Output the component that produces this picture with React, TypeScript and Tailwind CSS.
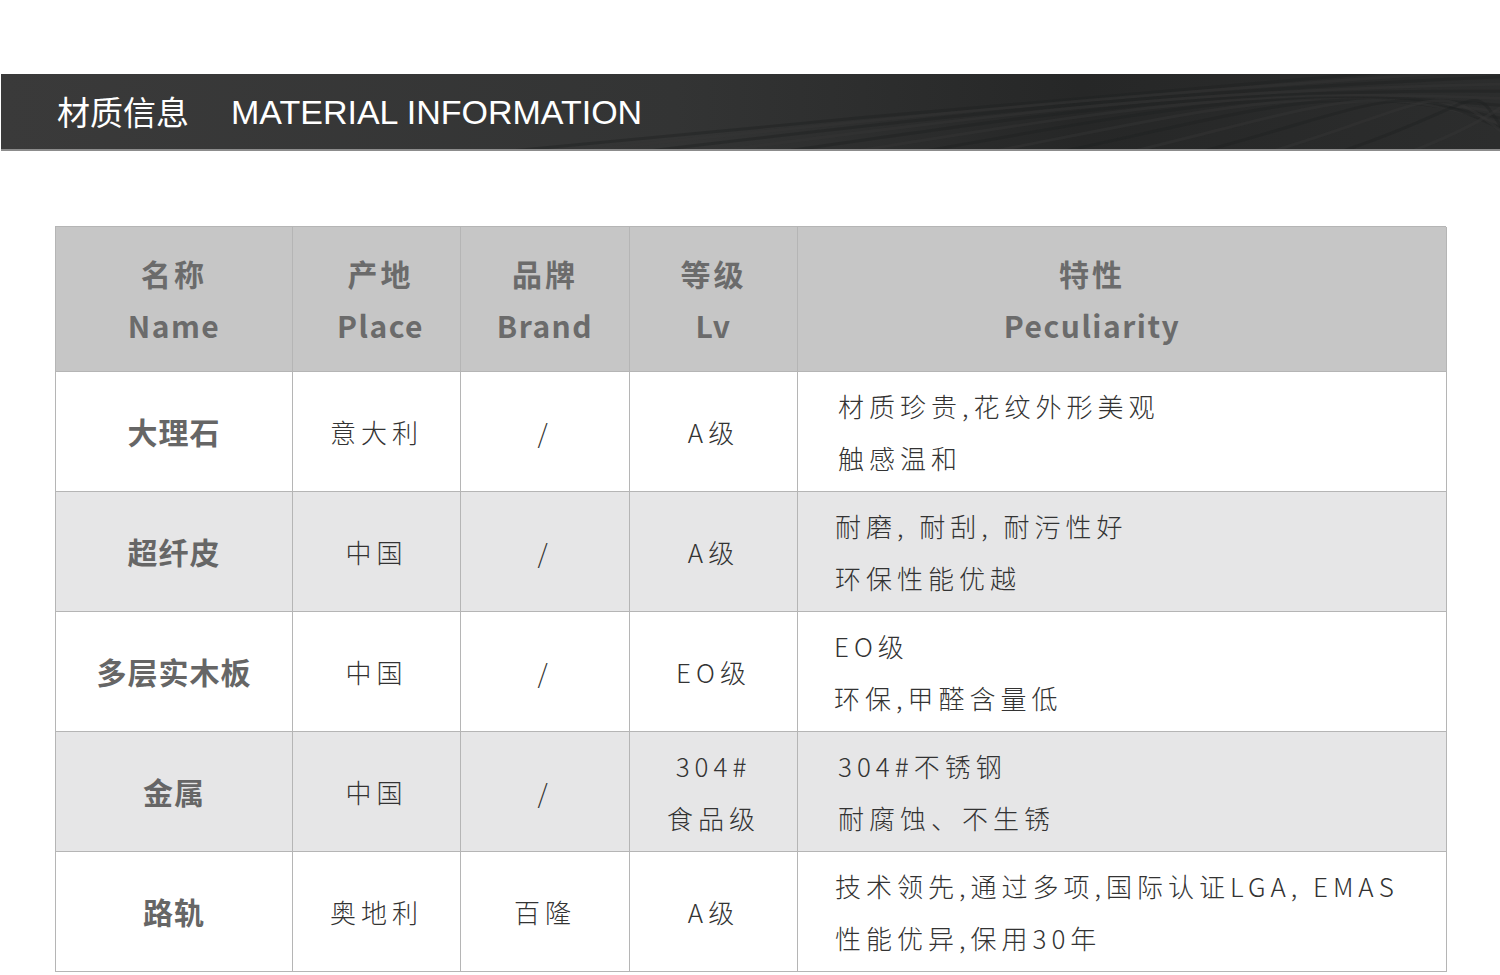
import React from 'react';

interface Row {
  name: string;
  place: string;
  brand: string;
  lv: string[];
  peculiarity: string[];
  shaded: boolean;
  padClass: string;
}

const ROWS: Row[] = [
  {
    name: '大理石',
    place: '意大利',
    brand: '/',
    lv: ['A级'],
    peculiarity: ['材质珍贵,花纹外形美观', '触感温和'],
    shaded: false,
    padClass: 'pl-[40px]',
  },
  {
    name: '超纤皮',
    place: '中国',
    brand: '/',
    lv: ['A级'],
    peculiarity: ['耐磨, 耐刮, 耐污性好', '环保性能优越'],
    shaded: true,
    padClass: 'pl-[37px]',
  },
  {
    name: '多层实木板',
    place: '中国',
    brand: '/',
    lv: ['EO级'],
    peculiarity: ['EO级', '环保,甲醛含量低'],
    shaded: false,
    padClass: 'pl-[36px]',
  },
  {
    name: '金属',
    place: '中国',
    brand: '/',
    lv: ['304#', '食品级'],
    peculiarity: ['304#不锈钢', '耐腐蚀、不生锈'],
    shaded: true,
    padClass: 'pl-[40px]',
  },
  {
    name: '路轨',
    place: '奥地利',
    brand: '百隆',
    lv: ['A级'],
    peculiarity: ['技术领先,通过多项,国际认证LGA, EMAS', '性能优异,保用30年'],
    shaded: false,
    padClass: 'pl-[37px]',
  },
];

const HEADERS = [
  { zh: '名称', en: 'Name', extra: '' },
  { zh: '产地', en: 'Place', extra: 'pl-[8px]' },
  { zh: '品牌', en: 'Brand', extra: '' },
  { zh: '等级', en: 'Lv', extra: '' },
  { zh: '特性', en: 'Peculiarity', extra: 'pr-[60px]' },
];

const CJK = "font-['Noto_Sans_CJK_SC','Noto_Sans',sans-serif]";

// Dark wavy banner texture
function Waves() {
  return (
    <svg
      className="absolute inset-0 h-full w-full"
      viewBox="0 0 1500 77"
      preserveAspectRatio="none"
    >
      <defs>
        <linearGradient id="bg" x1="0" y1="0" x2="1" y2="0">
          <stop offset="0" stopColor="#3a3a3a" />
          <stop offset="0.45" stopColor="#333434" />
          <stop offset="0.72" stopColor="#262727" />
          <stop offset="1" stopColor="#2c2d2d" />
        </linearGradient>
      </defs>
      <rect width="1500" height="77" fill="url(#bg)" />
      {Array.from({ length: 14 }).map((_, i) => (
        <path
          key={i}
          d={`M ${500 + i * 70} 80 C ${850 + i * 55} ${45 - i * 2}, ${1100 + i * 30} ${22 - i * 2}, 1520 ${-14 + i * 8}`}
          fill="none"
          stroke={i % 2 ? '#353636' : '#202121'}
          strokeWidth={3}
          opacity={0.45}
        />
      ))}
    </svg>
  );
}

export default function App() {
  return (
    <div className="min-h-[975px] w-[1500px] bg-white pt-[74px]">
      {/* Banner */}
      <div className="relative ml-px h-[77px] overflow-hidden border-b-2 border-[#8c8c8c]">
        <Waves />
        <div className="relative flex h-full items-center pl-[56px] text-white">
          <span className={`${CJK} text-[33px] leading-none`}>材质信息</span>
          <span className="ml-[42px] font-['Liberation_Sans',Arial,sans-serif] text-[34px] leading-none">
            MATERIAL INFORMATION
          </span>
        </div>
      </div>

      {/* Table */}
      <div
        className={`${CJK} mx-[55px] mt-[75px] grid w-[1391px] grid-cols-[237px_168px_169px_168px_649px] border-l border-t border-[#b5b5b5]`}
      >
        {HEADERS.map((h) => (
          <div
            key={h.zh}
            className={`flex h-[145px] flex-col items-center justify-center border-b border-r border-[#b5b5b5] bg-[#c6c6c6] text-[30px] font-bold leading-[52px] text-[#6b6b6b] ${h.extra}`}
          >
            <span className="tracking-[3px]">{h.zh}</span>
            <span className="tracking-[1.5px]">{h.en}</span>
          </div>
        ))}

        {ROWS.map((r) => {
          const bg = r.shaded ? 'bg-[#e6e6e7]' : 'bg-white';
          const cell = `flex h-[120px] flex-col items-center justify-center border-b border-r border-[#b5b5b5] ${bg}`;
          const thin = 'text-[26px] font-light leading-[52px] tracking-[5px] text-[#333]';
          return (
            <React.Fragment key={r.name}>
              <div className={`${cell} text-[30px] font-bold tracking-[1px] text-[#666]`}>{r.name}</div>
              <div className={`${cell} ${thin}`}>{r.place}</div>
              <div className={`${cell} ${thin}`}>{r.brand}</div>
              <div className={`${cell} ${thin}`}>
                {r.lv.map((l) => (
                  <span key={l}>{l}</span>
                ))}
              </div>
              <div
                className={`flex h-[120px] flex-col justify-center border-b border-r border-[#b5b5b5] ${bg} ${r.padClass} ${thin}`}
              >
                {r.peculiarity.map((p) => (
                  <span key={p}>{p}</span>
                ))}
              </div>
            </React.Fragment>
          );
        })}
      </div>
    </div>
  );
}
